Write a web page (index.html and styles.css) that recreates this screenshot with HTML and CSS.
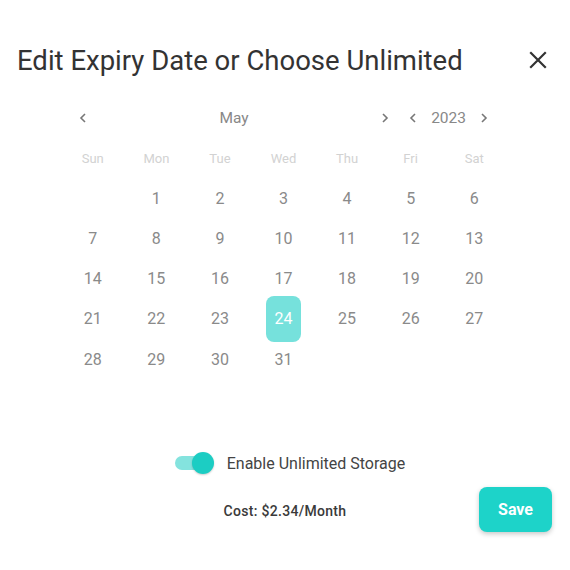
FILE: index.html
```html
<!DOCTYPE html>
<html lang="en">
<head>
<meta charset="utf-8">
<title>Edit Expiry Date</title>
<link rel="stylesheet" href="styles.css">
</head>
<body>
<div class="dialog">
  <div class="dialog-header">
    <h1 class="title">Edit Expiry Date or Choose Unlimited</h1>
    <button class="close" aria-label="Close">
      <svg width="18" height="18" viewBox="0 0 18 18"><path d="M2 2 L16 16 M16 2 L2 16" stroke="#333" stroke-width="2.2" stroke-linecap="square" fill="none"/></svg>
    </button>
  </div>

  <div class="calendar">
    <div class="cal-nav">
      <div class="month-nav">
        <button class="chev"><svg width="8" height="12" viewBox="0 0 8 12"><path d="M6 2 L2 6 L6 10" stroke="#777" stroke-width="1.6" fill="none"/></svg></button>
        <span class="nav-label">May</span>
        <button class="chev"><svg width="8" height="12" viewBox="0 0 8 12"><path d="M2 2 L6 6 L2 10" stroke="#777" stroke-width="1.6" fill="none"/></svg></button>
      </div>
      <div class="year-nav">
        <button class="chev"><svg width="8" height="12" viewBox="0 0 8 12"><path d="M6 2 L2 6 L6 10" stroke="#777" stroke-width="1.6" fill="none"/></svg></button>
        <span class="nav-label">2023</span>
        <button class="chev"><svg width="8" height="12" viewBox="0 0 8 12"><path d="M2 2 L6 6 L2 10" stroke="#777" stroke-width="1.6" fill="none"/></svg></button>
      </div>
    </div>
    <div class="grid weekdays">
      <span>Sun</span><span>Mon</span><span>Tue</span><span>Wed</span><span>Thu</span><span>Fri</span><span>Sat</span>
    </div>
    <div class="grid days">
      <span></span><span>1</span><span>2</span><span>3</span><span>4</span><span>5</span><span>6</span>
      <span>7</span><span>8</span><span>9</span><span>10</span><span>11</span><span>12</span><span>13</span>
      <span>14</span><span>15</span><span>16</span><span>17</span><span>18</span><span>19</span><span>20</span>
      <span>21</span><span>22</span><span>23</span><span><b class="selected">24</b></span><span>25</span><span>26</span><span>27</span>
      <span>28</span><span>29</span><span>30</span><span>31</span><span></span><span></span><span></span>
    </div>
  </div>

  <div class="toggle-row">
    <span class="switch"><span class="track"></span><span class="knob"></span></span>
    <span class="toggle-label">Enable Unlimited Storage</span>
  </div>

  <div class="footer">
    <span></span>
    <span class="cost">Cost: $2.34/Month</span>
    <button class="save">Save</button>
  </div>
</div>
</body>
</html>
```

FILE: styles.css
```css
html, body {
  margin: 0;
  padding: 0;
  background: #fff;
}
body {
  font-family: Roboto, "Liberation Sans", sans-serif;
  width: 570px;
  height: 570px;
  overflow: hidden;
}
button {
  border: none;
  background: none;
  padding: 0;
  font-family: inherit;
  cursor: pointer;
}
.dialog {
  padding-top: 45px;
}
.dialog-header {
  display: flex;
  align-items: center;
  justify-content: space-between;
  padding: 0 23px 0 17px;
  height: 32px;
}
.title {
  margin: 0;
  font-size: 27.5px;
  font-weight: 400;
  line-height: 32px;
  color: #333;
}
.close {
  width: 18px;
  height: 18px;
  display: flex;
  margin-top: -2px;
}
.calendar {
  margin: 21px 64px 0 61px;
}
.cal-nav {
  display: flex;
  align-items: center;
  height: 40px;
  padding: 0 12px;
  gap: 8px;
}
.month-nav {
  flex: 1;
  display: flex;
  align-items: center;
  justify-content: space-between;
}
.year-nav {
  display: flex;
  align-items: center;
  gap: 8px;
}
.chev {
  width: 20px;
  height: 20px;
  display: flex;
  align-items: center;
  justify-content: center;
}
.nav-label {
  font-size: 15.5px;
  color: #888;
}
.grid {
  display: grid;
  grid-template-columns: repeat(7, 1fr);
  grid-auto-rows: 40.25px;
  align-items: center;
  justify-items: center;
}
.weekdays {
  font-size: 13px;
  color: #d2d2d2;
  grid-auto-rows: 40px;
}
.days {
  font-size: 16px;
  color: #8a8a8a;
}
.selected {
  display: flex;
  align-items: center;
  justify-content: center;
  width: 35px;
  height: 46px;
  margin: -3px 0;
  border-radius: 8px;
  background: #76e1dc;
  color: #fff;
  font-weight: 400;
}
.toggle-row {
  margin-top: 72px;
  display: flex;
  align-items: center;
  justify-content: center;
  gap: 12px;
  height: 24px;
  padding-left: 10px;
}
.switch {
  position: relative;
  width: 40px;
  height: 24px;
  display: block;
}
.track {
  position: absolute;
  left: 0;
  top: 5px;
  width: 36px;
  height: 14px;
  border-radius: 7px;
  background: #84e3de;
}
.knob {
  position: absolute;
  left: 17px;
  top: 1px;
  width: 22px;
  height: 22px;
  border-radius: 50%;
  background: #1ccdc3;
  box-shadow: 0 1px 2px rgba(0,0,0,0.2);
}
.toggle-label {
  font-size: 16px;
  color: #444;
}
.footer {
  margin-top: 12px;
  display: grid;
  grid-template-columns: 1fr auto 1fr;
  align-items: center;
  padding: 0 18px;
}
.cost {
  font-size: 14px;
  font-weight: 500;
  letter-spacing: 0.3px;
  color: #3a3a3a;
  margin-top: 2px;
}
.save {
  justify-self: end;
  width: 73px;
  height: 45px;
  border-radius: 8px;
  background: #1dd3c9;
  color: #fff;
  font-size: 16px;
  font-weight: 700;
  box-shadow: 0 2px 5px rgba(0,0,0,0.22);
}
```
